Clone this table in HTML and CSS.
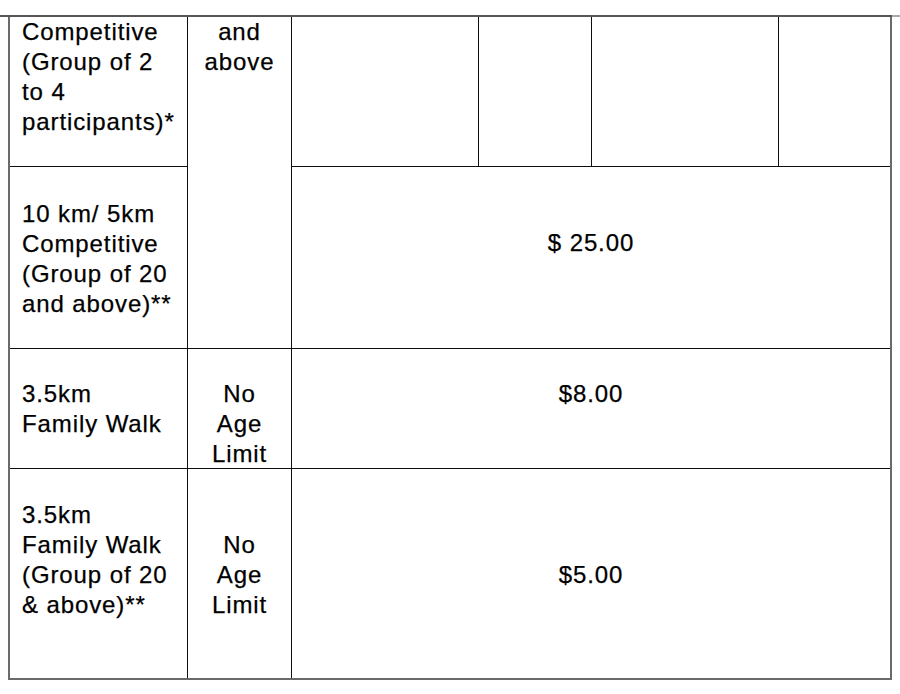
FILE: index.html
```html
<!DOCTYPE html>
<html lang="en">
<head>
<meta charset="utf-8">
<title>Fees</title>
<link rel="stylesheet" href="styles.css">
</head>
<body>
<div class="page-rule"></div>
<div class="fee-table">
  <div class="cell c-cat r1">Competitive<br>(Group of 2<br>to 4<br>participants)*</div>
  <div class="cell c-age r12">and<br>above</div>
  <div class="cell r1 c3"></div>
  <div class="cell r1 c4"></div>
  <div class="cell r1 c5"></div>
  <div class="cell r1 c6"></div>

  <div class="cell c-cat r2 pad-32">10 km/ 5km<br>Competitive<br>(Group of 20<br>and above)**</div>
  <div class="cell price r2 pad-61">$ 25.00</div>

  <div class="cell c-cat r3 pad-30">3.5km<br>Family Walk</div>
  <div class="cell c-age r3 pad-30">No<br>Age<br>Limit</div>
  <div class="cell price r3 pad-30">$8.00</div>

  <div class="cell c-cat r4 pad-31">3.5km<br>Family Walk<br>(Group of 20<br>&amp; above)**</div>
  <div class="cell c-age r4 pad-61">No<br>Age<br>Limit</div>
  <div class="cell price r4 pad-91">$5.00</div>
</div>
</body>
</html>
```

FILE: styles.css
```css
html, body {
  margin: 0;
  padding: 0;
  background: #ffffff;
}

body {
  padding-top: 15px;
  font-family: "Liberation Sans", Arial, sans-serif;
  font-size: 24px;
  line-height: 30px;
  letter-spacing: 0.9px;
  color: #000000;
  -webkit-text-stroke: 0.25px #000000;
}

.page-rule {
  height: 2px;
  background: linear-gradient(to right, #555555 0, #555555 892px, #a8a8a8 892px, #a8a8a8 100%);
}

.fee-table {
  margin-left: 8px;
  width: 880px;
  display: grid;
  grid-template-columns: 177px 103px 186px 112px 186px 111px;
  grid-template-rows: 149px 181px 119px 209px;
  gap: 1px;
  background: #0e0e0e;
  border-left: 2px solid #6a6a6a;
  border-right: 2px solid #6a6a6a;
  border-bottom: 2px solid #6a6a6a;
}

.cell {
  background: #ffffff;
  white-space: nowrap;
}

.c-cat {
  grid-column: 1;
  padding-left: 12px;
}

.c-age {
  grid-column: 2;
  text-align: center;
}

.price {
  grid-column: 3 / 7;
  text-align: center;
}

.r1 { grid-row: 1; }
.r12 { grid-row: 1 / 3; }
.r2 { grid-row: 2; }
.r3 { grid-row: 3; }
.r4 { grid-row: 4; }

.c3 { grid-column: 3; }
.c4 { grid-column: 4; }
.c5 { grid-column: 5; }
.c6 { grid-column: 6; }

.pad-30 { padding-top: 30px; }
.pad-31 { padding-top: 31px; }
.pad-32 { padding-top: 32px; }
.pad-61 { padding-top: 61px; }
.pad-91 { padding-top: 91px; }
```
